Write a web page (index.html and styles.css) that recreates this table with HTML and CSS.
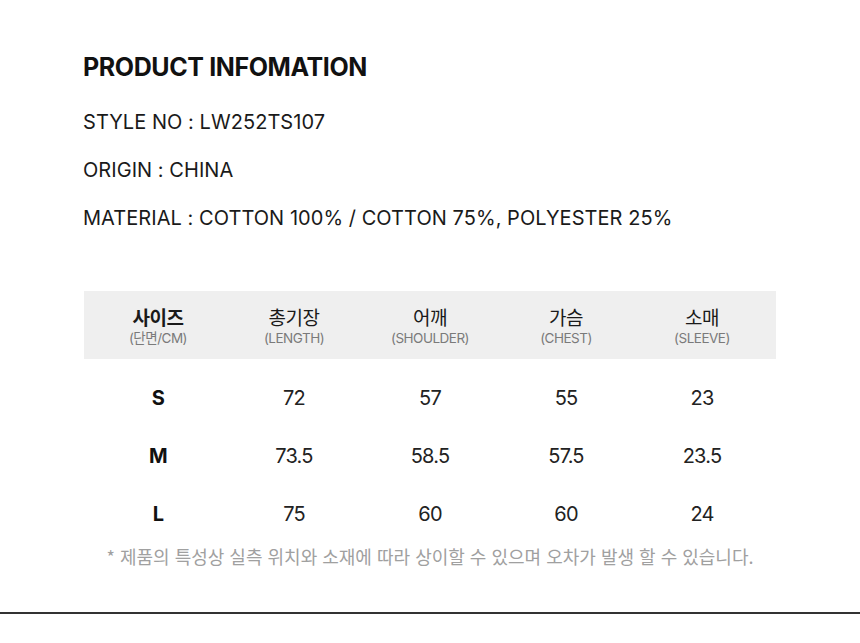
FILE: index.html
```html
<!DOCTYPE html>
<html lang="ko">
<head>
<meta charset="utf-8">
<title>Product Information</title>
<link rel="stylesheet" href="styles.css">
</head>
<body>
<main class="page">
  <section class="info">
    <h1 class="info-title">PRODUCT INFOMATION</h1>
    <p class="info-line">STYLE NO : LW252TS107</p>
    <p class="info-line">ORIGIN : CHINA</p>
    <p class="info-line">MATERIAL : COTTON 100% / COTTON 75%, POLYESTER 25%</p>
  </section>

  <section class="size">
    <div class="size-head">
      <div class="head-cell"><span class="head-ko head-ko-strong">사이즈</span><span class="head-sub">(단면/CM)</span></div>
      <div class="head-cell"><span class="head-ko">총기장</span><span class="head-sub">(LENGTH)</span></div>
      <div class="head-cell"><span class="head-ko">어깨</span><span class="head-sub">(SHOULDER)</span></div>
      <div class="head-cell"><span class="head-ko">가슴</span><span class="head-sub">(CHEST)</span></div>
      <div class="head-cell"><span class="head-ko">소매</span><span class="head-sub">(SLEEVE)</span></div>
    </div>
    <div class="size-body">
      <div class="size-row">
        <span class="cell cell-size">S</span><span class="cell">72</span><span class="cell">57</span><span class="cell">55</span><span class="cell">23</span>
      </div>
      <div class="size-row">
        <span class="cell cell-size">M</span><span class="cell">73.5</span><span class="cell">58.5</span><span class="cell">57.5</span><span class="cell">23.5</span>
      </div>
      <div class="size-row">
        <span class="cell cell-size">L</span><span class="cell">75</span><span class="cell">60</span><span class="cell">60</span><span class="cell">24</span>
      </div>
    </div>
    <p class="size-note">* 제품의 특성상 실측 위치와 소재에 따라 상이할 수 있으며 오차가 발생 할 수 있습니다.</p>
  </section>

  <hr class="divider">
</main>
</body>
</html>
```

FILE: styles.css
```css
* {
  box-sizing: border-box;
}

html, body {
  margin: 0;
  padding: 0;
  background: #ffffff;
}

body {
  font-family: Inter, "Noto Sans CJK KR", sans-serif;
  color: #1a1a1a;
}

.page {
  width: 860px;
  padding-top: 52px;
}

.info {
  padding: 0 83px;
}

.info-title {
  margin: 0 0 16px;
  font-size: 25px;
  line-height: 30px;
  font-weight: 700;
  letter-spacing: -0.4px;
  color: #111;
}

.info-line {
  margin: 0;
  font-size: 20px;
  line-height: 48px;
  font-weight: 400;
  letter-spacing: 0.05px;
  color: #1a1a1a;
}

.size {
  margin: 49px 84px 0;
  width: 692px;
}

.size-head {
  display: grid;
  grid-template-columns: repeat(5, 1fr);
  height: 68px;
  padding: 0 6px;
  background: #efefef;
}

.head-cell {
  display: flex;
  flex-direction: column;
  align-items: center;
  justify-content: center;
  padding-top: 2px;
}

.head-ko {
  font-family: "Noto Sans CJK KR", sans-serif;
  font-size: 19px;
  line-height: 24px;
  font-weight: 400;
  color: #1a1a1a;
  letter-spacing: -0.5px;
}

.head-ko-strong {
  font-weight: 700;
}

.head-sub {
  font-family: Inter, "Noto Sans CJK KR", sans-serif;
  font-size: 13.5px;
  line-height: 19px;
  color: #7a7a7a;
  letter-spacing: -0.5px;
}

.size-body {
  padding: 10px 6px 0;
}

.size-row {
  display: grid;
  grid-template-columns: repeat(5, 1fr);
  height: 58px;
  align-items: center;
}

.cell {
  text-align: center;
  font-size: 20px;
  letter-spacing: -0.8px;
  color: #222;
}

.cell-size {
  font-weight: 700;
  color: #111;
}

.size-note {
  margin: 0;
  text-align: center;
  font-family: "Noto Sans CJK KR", sans-serif;
  font-size: 18px;
  line-height: 26px;
  color: #a0a0a0;
  letter-spacing: 0px;
}

.divider {
  margin: 43px 0 0;
  border: 0;
  height: 2px;
  background: #333;
}
```
